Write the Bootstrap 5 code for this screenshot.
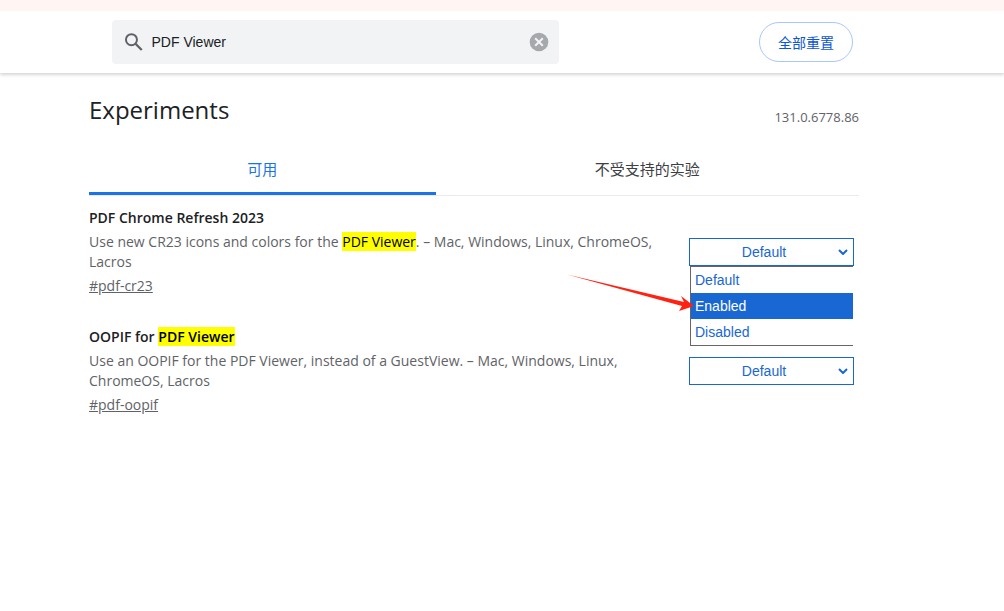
<!DOCTYPE html>
<html lang="zh-CN">
<head>
<meta charset="utf-8">
<meta name="viewport" content="width=device-width, initial-scale=1">
<title>Experiments</title>
<link href="https://cdn.jsdelivr.net/npm/bootstrap@5.3.0/dist/css/bootstrap.min.css" rel="stylesheet">
<style>
  body { font-family: "Open Sans", "Noto Sans CJK SC", sans-serif; font-size: 14px; line-height: 20px; color: #202124; background: #fff; }
  .notice-strip { height: 11px; background: #fff6f3; }
  .page-gutter { padding-left: 89px; padding-right: 145px; }
  .flags-header { height: 62px; box-shadow: 0 2px 3px rgba(0,0,0,.16); clip-path: inset(0 0 -6px 0); }
  .search-box { width: 58%; height: 44px; background: #f1f3f4; border-radius: 4px; margin-left: 23px; padding: 0 10px 0 12px; }
  .search-box input { font: 14px/20px "Liberation Sans", Arial, sans-serif; color: #202124; }
  .search-box input:focus { box-shadow: none; }
  .reset-btn { width: 94px; height: 40px; padding: 0; margin-right: 6px; border: 1px solid #a8c7fa; border-radius: 20px; color: #0b57d0; font-size: 14px; }
  h1 { font-size: 24px; line-height: 34px; }
  .version { color: #5f6368; font-size: 13px; }
  .flag-tabs { height: 50px; margin-top: 19px; border-bottom: 1px solid #e8eaed; }
  .flag-tabs .nav-link { padding: 0; border-radius: 0; color: #3c4043; font-size: 15px; line-height: 46px; }
  .flag-tabs .tab-on { width: 45%; color: #1a73e8; border-bottom: 3px solid #1a73e8; border-radius: 2px 2px 0 0; }
  .flag-item { margin-bottom: 31px; }
  .flag-item h2 { font-size: 14px; line-height: 20px; font-weight: 600; margin-bottom: 4px; }
  .flag-item p { color: #5f6368; margin-bottom: 4px; }
  .flag-item mark { background: #ff0; color: #000; padding: 0; }
  .flag-item a { color: #5f6368; }
  .flag-text { max-width: 580px; }
  .flag-control { width: 165px; margin: 30px 5px 0 0; font: 14px/26px "Liberation Sans", Arial, sans-serif; color: #1967d2; }
  .flag-select { display: block; width: 100%; height: 28px; padding: 0 15px 0 0; border: 1px solid #1967d2; border-radius: 0; appearance: none; font: inherit; color: inherit; text-align: center; text-align-last: center;
    background: #fff url("data:image/svg+xml,%3Csvg xmlns='http://www.w3.org/2000/svg' width='10' height='6'%3E%3Cpath d='M1 1l4 4 4-4' fill='none' stroke='%231967d2' stroke-width='2'/%3E%3C/svg%3E") no-repeat right 5px center; }
  .option-list { top: 28px; left: 1px; width: 163px; border: 1px solid #666; border-right: 0; background: #fff; z-index: 2; }
  .option-list button { display: block; width: 100%; height: 26px; padding: 0 4px; border: 0; background: #fff; color: inherit; font: inherit; text-align: left; }
  .option-list .chosen { background: #1967d2; color: #fff; }
  .pointer-arrow { left: -122px; top: 36px; z-index: 3; pointer-events: none; }
</style>
</head>
<body>
<div class="notice-strip"></div>
<header class="flags-header page-gutter d-flex align-items-center justify-content-between">
  <div class="search-box d-flex align-items-center" role="search">
    <svg width="22" height="22" viewBox="0 0 22 22" fill="none" stroke="#5f6368" aria-hidden="true"><circle cx="8.4" cy="8.4" r="6.2" stroke-width="2.2"/><path d="M13 13l7 7" stroke-width="2.6"/></svg>
    <input class="form-control border-0 bg-transparent p-0 ms-2" type="text" aria-label="Search flags" value="PDF Viewer">
    <button class="btn p-0 border-0 d-flex" type="button" aria-label="Clear search"><svg width="20" height="20" viewBox="0 0 20 20"><circle cx="10" cy="10" r="9.3" fill="#a6a9ab"/><path d="M6.2 6.2l7.6 7.6M13.8 6.2l-7.6 7.6" stroke="#f1f3f4" stroke-width="2"/></svg></button>
  </div>
  <button class="btn reset-btn" type="button">全部重置</button>
</header>
<main class="page-gutter">
  <div class="d-flex justify-content-between pt-3">
    <h1 class="fw-normal mt-1 mb-0">Experiments</h1>
    <span class="version mt-3 pt-1 lh-sm">131.0.6778.86</span>
  </div>
  <nav class="flag-tabs nav nav-fill flex-nowrap">
    <a class="nav-link tab-on flex-grow-0" href="#available" aria-current="page">可用</a>
    <a class="nav-link" href="#unavailable">不受支持的实验</a>
  </nav>
  <div class="pt-2 mt-1">
    <section class="flag-item d-flex justify-content-between">
      <div class="flag-text">
        <h2>PDF Chrome Refresh 2023</h2>
        <p>Use new CR23 icons and colors for the <mark>PDF Viewer</mark>. – Mac, Windows, Linux, ChromeOS, Lacros</p>
        <a href="#pdf-cr23">#pdf-cr23</a>
      </div>
      <div class="flag-control position-relative flex-shrink-0">
        <select class="flag-select" aria-label="PDF Chrome Refresh 2023"><option>Default</option><option>Enabled</option><option>Disabled</option></select>
        <div class="option-list position-absolute">
          <button type="button">Default</button>
          <button type="button" class="chosen">Enabled</button>
          <button type="button">Disabled</button>
        </div>
        <svg class="pointer-arrow position-absolute" width="128" height="40" viewBox="0 0 128 40" fill="#ff2213" aria-hidden="true"><path d="M0 0.5L117 28l-3-6 13 10-15 5 3-5z"/></svg>
      </div>
    </section>
    <section class="flag-item d-flex justify-content-between">
      <div class="flag-text">
        <h2>OOPIF for <mark>PDF Viewer</mark></h2>
        <p>Use an OOPIF for the PDF Viewer, instead of a GuestView. – Mac, Windows, Linux, ChromeOS, Lacros</p>
        <a href="#pdf-oopif">#pdf-oopif</a>
      </div>
      <div class="flag-control flex-shrink-0">
        <select class="flag-select" aria-label="OOPIF for PDF Viewer"><option>Default</option><option>Enabled</option><option>Disabled</option></select>
      </div>
    </section>
  </div>
</main>
<script src="https://cdn.jsdelivr.net/npm/bootstrap@5.3.0/dist/js/bootstrap.bundle.min.js"></script>
</body>
</html>
